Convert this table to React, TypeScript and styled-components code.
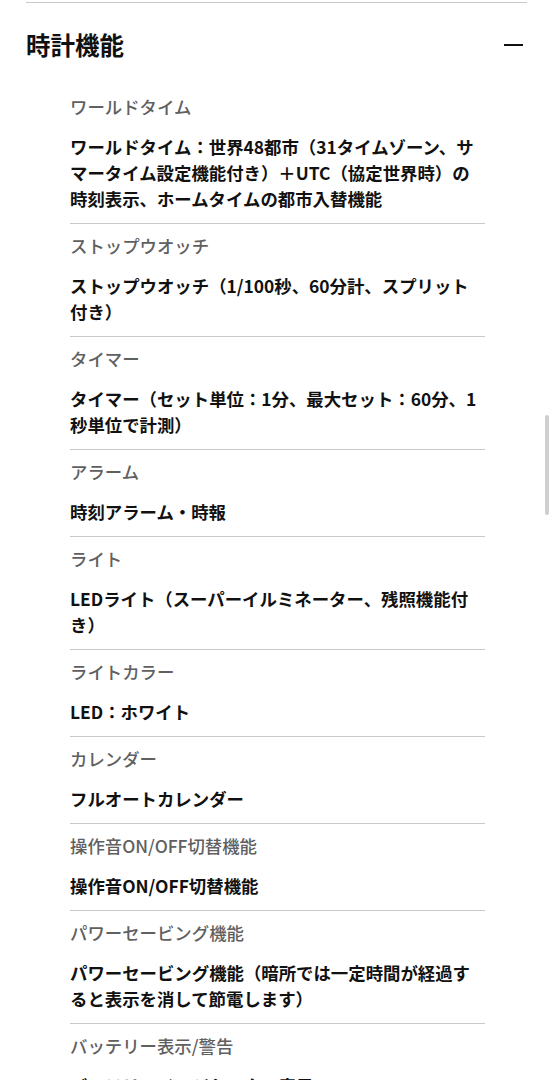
import * as React from 'react'
import styled, {createGlobalStyle} from 'styled-components'

const GlobalStyle = createGlobalStyle`
  html, body {
    margin: 0;
    padding: 0;
    background: #fff;
  }
  body {
    font-family: "Noto Sans CJK JP", "Noto Sans", sans-serif;
    color: #111;
    overflow: hidden;
  }
`

const Page = styled.div`
  width: 555px;
  height: 1080px;
  overflow: hidden;
  padding-top: 2px;
  box-sizing: border-box;
`

const Section = styled.section`
  margin: 0 28px 0 26px;
  border-top: 1px solid #c9c9c9;
`

const Header = styled.div`
  display: flex;
  align-items: center;
  justify-content: space-between;
  padding: 26px 4px 0 0;
  height: 32px;
`

const Title = styled.h2`
  margin: 0;
  font-size: 24.5px;
  line-height: 32px;
  font-weight: 700;
  color: #111;
`

const Minus = styled.span`
  display: block;
  width: 19px;
  height: 2px;
  background: #111;
`

const List = styled.dl`
  margin: 34px 0 0 44px;
  width: 415px;
`

const Item = styled.div<{first?: boolean}>`
  padding: ${p => (p.first ? '0' : '10px')} 0 11px 0;
  border-bottom: 1px solid #c9c9c9;
`

const Label = styled.dt`
  font-size: 17.4px;
  line-height: 24px;
  color: #606060;
  font-weight: 500;
`

const Value = styled.dd`
  margin: 15px 0 0 0;
  font-size: 17.4px;
  line-height: 26px;
  color: #111;
  font-weight: 700;
`

const Scrollbar = styled.div`
  position: fixed;
  left: 545px;
  top: 415px;
  width: 4px;
  height: 100px;
  border-radius: 2px;
  background: #cfcfcf;
`

const specs = [
  {
    label: 'ワールドタイム',
    value:
      'ワールドタイム：世界48都市（31タイムゾーン、サマータイム設定機能付き）＋UTC（協定世界時）の時刻表示、ホームタイムの都市入替機能',
  },
  {label: 'ストップウオッチ', value: 'ストップウオッチ（1/100秒、60分計、スプリット付き）'},
  {label: 'タイマー', value: 'タイマー（セット単位：1分、最大セット：60分、1秒単位で計測）'},
  {label: 'アラーム', value: '時刻アラーム・時報'},
  {label: 'ライト', value: 'LEDライト（スーパーイルミネーター、残照機能付き）'},
  {label: 'ライトカラー', value: 'LED：ホワイト'},
  {label: 'カレンダー', value: 'フルオートカレンダー'},
  {label: '操作音ON/OFF切替機能', value: '操作音ON/OFF切替機能'},
  {
    label: 'パワーセービング機能',
    value: 'パワーセービング機能（暗所では一定時間が経過すると表示を消して節電します）',
  },
  {label: 'バッテリー表示/警告', value: 'バッテリーインジケーター表示'},
]

const App = () => {
  return (
    <Page>
      <GlobalStyle />
      <Section>
        <Header>
          <Title>時計機能</Title>
          <Minus />
        </Header>
        <List>
          {specs.map((spec, i) => (
            <Item key={spec.label} first={i === 0}>
              <Label>{spec.label}</Label>
              <Value>{spec.value}</Value>
            </Item>
          ))}
        </List>
      </Section>
      <Scrollbar />
    </Page>
  )
}

export default App
